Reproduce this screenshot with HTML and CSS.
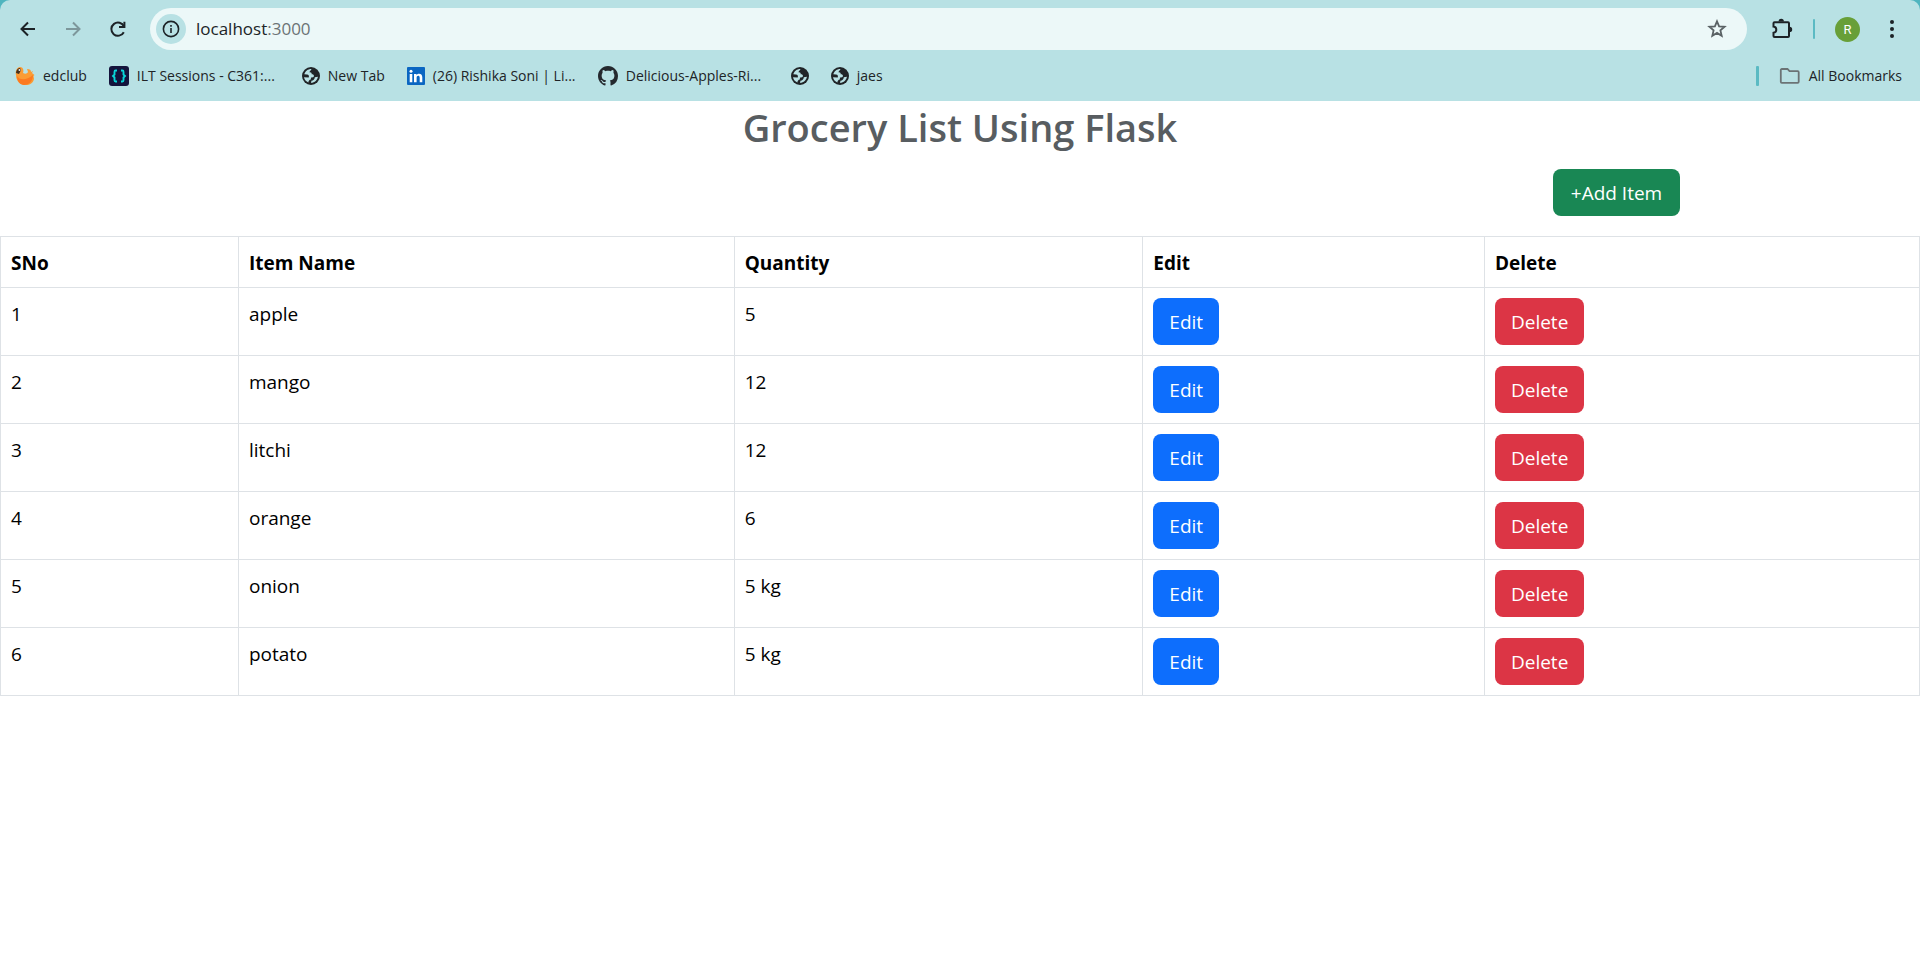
FILE: index.html
```html
<!DOCTYPE html>
<html lang="en">
<head>
<meta charset="utf-8">
<title>Grocery List</title>
<link rel="stylesheet" href="styles.css">
</head>
<body>
<svg class="sprite" aria-hidden="true">
  <symbol id="globe" viewBox="0 0 18 18">
    <circle cx="9" cy="9" r="9" fill="#202427"/>
    <path d="M9.500 2C9 3.500 7.600 4.200 7.400 5.400c1.600-.3 2.400.5 2.300 1.800 1.500 0 2.400.6 2.200 2-.2 1.100-1.500 1.300-2.900 1.300l-.2 2c-1.400.3-2.300 1.300-2.400 2.900A7 7 0 0 1 2 10.200l4.700.2C7.400 8.700 6.700 7.600 5 7.400L2.300 7.200C3.100 4.200 6 1.900 9.500 2z" fill="#b8e1e4"/>
    <path d="M12.800 10.300l3.100-.5c-.4 3.300-3.200 6-6.800 6.200l.3-2.200c1.900-.2 3.200-1.400 3.400-3.500z" fill="#b8e1e4"/>
  </symbol>
</svg>
<header class="browser">
  <div class="toolbar">
    <button class="tool" aria-label="Back"><svg width="20" height="20" viewBox="0 0 20 20"><path d="M17 10H4M10 3.500 3.500 10l6.500 6.500" fill="none" stroke="#1c2226" stroke-width="2"/></svg></button>
    <button class="tool" aria-label="Forward"><svg width="20" height="20" viewBox="0 0 20 20"><path d="M3 10h13M10 3.500l6.500 6.500-6.500 6.500" fill="none" stroke="#7d979b" stroke-width="2"/></svg></button>
    <button class="tool" aria-label="Reload"><svg width="20" height="20" viewBox="0 0 20 20"><path d="M15.800 13.200A6.600 6.600 0 1 1 16 7.500" fill="none" stroke="#1c2226" stroke-width="2"/><path d="M17.400 2.700V9H11V7h4.400V2.700z" fill="#1c2226"/></svg></button>
    <div class="omnibox">
      <button class="site-info" aria-label="Site information"><svg width="18" height="18" viewBox="0 0 18 18"><circle cx="9" cy="9" r="7.600" fill="none" stroke="#1c2226" stroke-width="1.600"/><path d="M8.200 8h1.600v5H8.200zM8.200 5h1.600v1.700H8.200z" fill="#1c2226"/></svg></button>
      <a class="address" href="#">localhost<span class="port">:3000</span></a>
      <button class="star" aria-label="Bookmark this tab"><svg width="20" height="20" viewBox="0 0 20 20"><path d="M10 2.300l2.100 5.100 5.500.4-4.200 3.600 1.300 5.400-4.700-2.900-4.700 2.900 1.300-5.400L2.400 7.800l5.500-.4z" fill="none" stroke="#5a6265" stroke-width="1.800"/></svg></button>
    </div>
    <div class="actions">
      <button class="tool" aria-label="Extensions"><svg width="22" height="22" viewBox="0 0 22 22"><path d="M3.500 4.200H17a1 1 0 0 1 1 1V18a1 1 0 0 1-1 1H3.500a1 1 0 0 1-1-1v-3.200c1.800-.3 2.800-1.500 2.800-3.100S4.300 8.900 2.500 8.600V5.200a1 1 0 0 1 1-1z" fill="none" stroke="#1c2226" stroke-width="2"/><path d="M7.500 3.500a2.700 2.700 0 0 1 5.400 0zM18.500 8.700a2.700 2.700 0 0 1 0 5.400z" fill="#1c2226"/></svg></button>
      <span class="rule thin"></span>
      <button class="avatar" aria-label="Profile">R</button>
      <button class="tool menu" aria-label="Menu"><svg width="6" height="20" viewBox="0 0 6 20" fill="#1c2226"><circle cx="3" cy="3" r="2"/><circle cx="3" cy="10" r="2"/><circle cx="3" cy="17" r="2"/></svg></button>
    </div>
  </div>
  <nav class="bookmarks" aria-label="Bookmarks">
    <a class="bookmark" href="#"><svg width="20" height="20" viewBox="0 0 20 20"><path d="M1 9C0 5 2 1 5 1c3 0 4 3 3 6 2 1 4 1 5-1l-1-3c3 0 4 1 4 3l2-1-1 2 2.500 2-1 1 .5 3c-1 4-4 6-8 6-6 0-10-4-10-10z" fill="#fb9c34"/><path d="M2 10c2 4 9 5 16-1 0 6-4 10-9 10-4 0-7-4-7-9z" fill="#fc7a20"/><path d="M1 7c0-3 2-5 4-5l1 2-2 4z" fill="#45311d"/><circle cx="4.500" cy="4" r="1" fill="#eee"/></svg>edclub</a>
    <a class="bookmark" href="#"><svg width="20" height="20" viewBox="0 0 20 20"><rect width="20" height="20" rx="3" fill="#14143c"/><path d="M8 4.500H6.500Q5.500 4.500 5.500 6v2.500L4 10l1.500 1.500V14q0 1.500 1 1.500H8M12 4.500h1.500q1 0 1 1.500v2.500L16 10l-1.500 1.500V14q0 1.500-1 1.500H12" fill="none" stroke="#08d8d8" stroke-width="1.900"/></svg><span class="long">ILT Sessions - C361:...</span></a>
    <a class="bookmark" href="#"><svg width="18" height="18"><use href="#globe"/></svg>New Tab</a>
    <a class="bookmark" href="#"><svg width="18" height="18" viewBox="0 0 18 18"><rect width="18" height="18" rx="1" fill="#0a66c2"/><path d="M2.700 7h2.600v8.300H2.700zM7 7h2.500v1.200C11 6 15.300 6.300 15.300 10.300v5h-2.600v-4.500c0-2.700-3.100-2.500-3.100 0v4.500H7z" fill="#fff"/><circle cx="4" cy="4.200" r="1.500" fill="#fff"/></svg><span class="long">(26) Rishika Soni | Li...</span></a>
    <a class="bookmark" href="#"><svg width="20" height="20" viewBox="0 0 16 16"><path fill="#24292e" d="M8 0C3.580 0 0 3.580 0 8c0 3.540 2.290 6.530 5.470 7.590.4.070.55-.17.55-.38 0-.19-.01-.82-.01-1.490-2.010.37-2.530-.49-2.690-.94-.09-.23-.48-.94-.82-1.130-.28-.15-.68-.52-.01-.53.63-.01 1.080.58 1.230.82.72 1.210 1.870.87 2.330.66.07-.52.28-.87.51-1.070-1.780-.2-3.640-.89-3.640-3.950 0-.87.31-1.590.82-2.150-.08-.2-.36-1.020.08-2.120 0 0 .67-.21 2.200.82.64-.18 1.320-.27 2-.27s1.360.09 2 .27c1.530-1.040 2.200-.82 2.200-.82.44 1.100.16 1.920.08 2.120.51.56.82 1.270.82 2.150 0 3.070-1.870 3.750-3.650 3.950.29.25.54.73.54 1.480 0 1.070-.01 1.930-.01 2.200 0 .21.15.46.55.38A8.010 8.010 0 0 0 16 8c0-4.420-3.580-8-8-8z"/></svg><span class="long">Delicious-Apples-Ri...</span></a>
    <a class="bookmark" href="#" aria-label="Bookmark"><svg width="18" height="18"><use href="#globe"/></svg></a>
    <a class="bookmark" href="#"><svg width="18" height="18"><use href="#globe"/></svg>jaes</a>
    <span class="rule thick"></span>
    <button class="bookmark all"><svg width="22" height="18" viewBox="0 0 22 18"><path d="M2.800 2h5.700l2 2.200h8.200a1 1 0 0 1 1 1v9.600a1 1 0 0 1-1 1H2.800a1 1 0 0 1-1-1V3a1 1 0 0 1 1-1z" fill="none" stroke="#6b7375" stroke-width="1.800"/></svg>All Bookmarks</button>
  </nav>
</header>
<main>
  <h1>Grocery List Using Flask</h1>
  <div class="add-row"><button class="btn success">+Add Item</button></div>
  <table>
    <colgroup><col class="c-sno"><col class="c-name"><col class="c-qty"><col class="c-edit"><col></colgroup>
    <thead><tr><th scope="col">SNo</th><th scope="col">Item Name</th><th scope="col">Quantity</th><th scope="col">Edit</th><th scope="col">Delete</th></tr></thead>
    <tbody>
      <tr><td>1</td><td>apple</td><td>5</td><td><button class="btn primary">Edit</button></td><td><button class="btn danger">Delete</button></td></tr>
      <tr><td>2</td><td>mango</td><td>12</td><td><button class="btn primary">Edit</button></td><td><button class="btn danger">Delete</button></td></tr>
      <tr><td>3</td><td>litchi</td><td>12</td><td><button class="btn primary">Edit</button></td><td><button class="btn danger">Delete</button></td></tr>
      <tr><td>4</td><td>orange</td><td>6</td><td><button class="btn primary">Edit</button></td><td><button class="btn danger">Delete</button></td></tr>
      <tr><td>5</td><td>onion</td><td>5 kg</td><td><button class="btn primary">Edit</button></td><td><button class="btn danger">Delete</button></td></tr>
      <tr><td>6</td><td>potato</td><td>5 kg</td><td><button class="btn primary">Edit</button></td><td><button class="btn danger">Delete</button></td></tr>
    </tbody>
  </table>
</main>
</body>
</html>
```
FILE: styles.css
```css
* { box-sizing: border-box; }
body {
  margin: 0;
  background: #fff;
  color: #000;
  font-family: "Open Sans", "Noto Sans", sans-serif;
  font-size: 19px;
  line-height: 30px;
}
button { font: inherit; color: inherit; border: 0; padding: 0; background: none; cursor: pointer; }
a { color: inherit; text-decoration: none; }
svg { display: block; flex: none; }
.sprite { position: absolute; width: 0; height: 0; }

.browser { background: linear-gradient(#4fb5bf 0 12px, #b8e1e4 12px); }
.toolbar {
  display: flex;
  align-items: center;
  height: 58px;
  padding: 0 20px 0 5px;
  background: #b8e1e4;
  border-radius: 10px 10px 0 0;
}
.tool { display: grid; place-items: center; width: 45px; height: 42px; }
.omnibox {
  display: flex;
  align-items: center;
  flex: 1;
  height: 42px;
  margin-left: 10px;
  padding: 0 20px 0 6px;
  border-radius: 21px;
  background: #ecf8f8;
}
.site-info {
  display: grid;
  place-items: center;
  width: 30px;
  height: 30px;
  border-radius: 50%;
  background: #b8e1e4;
}
.address { flex: 1; margin-left: 10px; color: #202427; font-size: 17px; }
.port { color: #6b7375; }
.actions { display: flex; align-items: center; margin-left: 12px; }
.rule { background: #5bbac3; border-radius: 1px; }
.thin { width: 2px; height: 20px; margin: 0 20px 0 9px; }
.avatar {
  width: 25px;
  height: 25px;
  border-radius: 50%;
  background: #689f38;
  color: #fff;
  font: 13px/25px Roboto, sans-serif;
}
.menu { width: 16px; margin-left: 24px; }

.bookmarks {
  display: flex;
  align-items: center;
  height: 43px;
  padding: 0 18px 8px 15px;
  color: #202427;
  font-size: 14px;
}
.bookmark { display: flex; align-items: center; gap: 8px; margin-right: 22px; white-space: nowrap; }
.long { min-width: 143px; }
.thick { width: 3px; height: 20px; margin: 0 20px 0 auto; }
.all { margin-right: 0; }

h1 {
  margin: 0 0 18px;
  padding-top: 2px;
  color: #585d61;
  font-size: 38px;
  font-weight: 600;
  line-height: 48px;
  text-align: center;
}
.add-row { display: flex; justify-content: flex-end; padding-right: 12.5%; margin-bottom: 20px; }
.btn {
  display: block;
  padding: 9px 16px 8px;
  border-radius: 8px;
  color: #fff;
}
.success { min-width: 127px; background: #198754; }
.primary { background: #0d6efd; }
.danger { background: #dc3545; }

table { width: 100%; border-collapse: collapse; table-layout: fixed; }
th, td { padding: 11px 10px 9px; border: 1px solid #dee2e6; text-align: left; vertical-align: top; }
td:has(.btn) { padding: 10px; }
th { font-weight: 700; }
.c-sno { width: 12.4%; }
.c-name { width: 25.83%; }
.c-qty { width: 21.3%; }
.c-edit { width: 17.8%; }
```
